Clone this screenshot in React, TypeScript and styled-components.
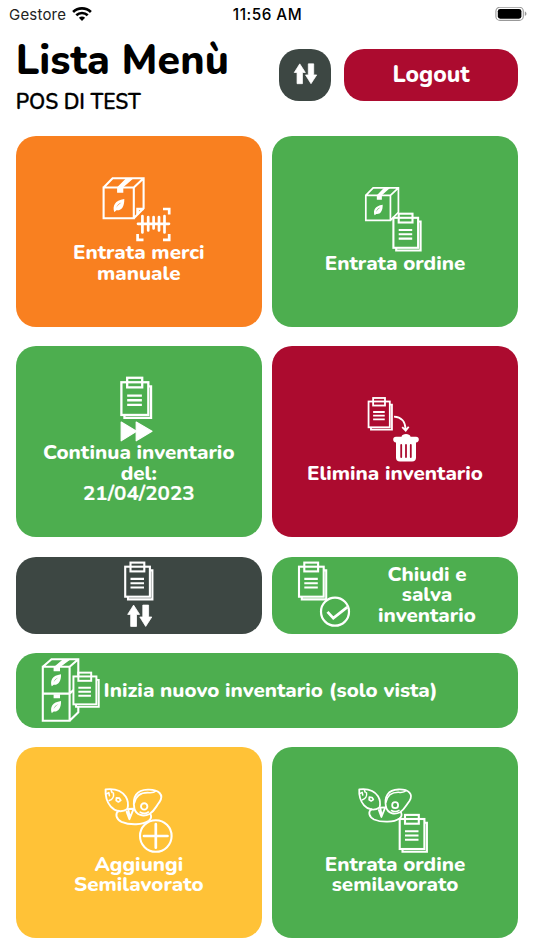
import React from "react";
import styled, { createGlobalStyle } from "styled-components";

const GlobalStyle = createGlobalStyle`
  * { box-sizing: border-box; }
  html, body { margin: 0; background: #fff; }
  body { font-family: "Nunito", "Lato", sans-serif; overflow: hidden; }
  button { font: inherit; border: 0; margin: 0; }
`;

const colors = {
  green: "#4dae4f",
  orange: "#f98020",
  red: "#ac0b2f",
  dark: "#3d4743",
  yellow: "#ffc237",
};

const Screen = styled.main`
  width: 534px;
  height: 950px;
  display: flex;
  flex-direction: column;
  background: #fff;
`;

const StatusBar = styled.div`
  height: 28px;
  flex: none;
  display: grid;
  grid-template-columns: 1fr auto 1fr;
  align-items: center;
  padding: 0 7px 0 9px;
  font-family: "Inter", sans-serif;
  font-size: 15px;
  color: #000;
`;

const Carrier = styled.div`
  display: flex;
  align-items: center;
  gap: 6px;
  letter-spacing: 0.2px;
  color: #222;
`;

const Clock = styled.div`
  font-size: 15.3px;
  font-weight: 500;
  letter-spacing: 0.5px;
  transform: translateX(-0.5px);
`;

const Battery = styled.svg`
  justify-self: end;
  display: block;
`;

const Header = styled.header`
  height: 108px;
  flex: none;
  display: flex;
  align-items: flex-start;
  padding: 21px 16px 0 15.7px;
`;

const Heading = styled.div`
  flex: 1;
  margin-top: -13px;
`;

const Title = styled.h1`
  margin: 0;
  font-size: 41px;
  line-height: 50px;
  font-weight: 800;
  letter-spacing: 0.1px;
  white-space: nowrap;
`;

const Subtitle = styled.div`
  margin-top: 4px;
  font-size: 20.9px;
  line-height: 24px;
  font-weight: 600;
  -webkit-text-stroke: 0.3px #000;
  white-space: nowrap;
`;

const HeaderButton = styled.button<{ $bg: string; $width: number }>`
  width: ${(p) => p.$width}px;
  height: 51.5px;
  margin-left: 13px;
  padding: 0 0 1.5px;
  display: flex;
  align-items: center;
  justify-content: center;
  border-radius: 20px;
  background: ${(p) => p.$bg};
  color: #fff;
  font-size: 23px;
  font-weight: 800;
`;

const Menu = styled.section`
  display: grid;
  grid-template-columns: 246px 246px;
  grid-template-rows: 190.6px 190.8px 77px 74.5px 190.8px;
  column-gap: 10.2px;
  row-gap: 19.6px;
  padding: 0 15.8px;
`;

const Tile = styled.button<{ $bg: string; $row?: boolean; $wide?: boolean }>`
  display: flex;
  flex-direction: ${(p) => (p.$row ? "row" : "column")};
  align-items: center;
  justify-content: ${(p) => (p.$row ? "flex-start" : "center")};
  grid-column: ${(p) => (p.$wide ? "span 2" : "auto")};
  padding: 0;
  min-width: 0;
  border-radius: 20px;
  background: ${(p) => p.$bg};
  color: #fff;
`;

const Label = styled.span`
  display: block;
  margin-top: -0.5px;
  padding-bottom: 2.2px;
  text-align: center;
  white-space: pre-line;
  font-size: 20.6px;
  line-height: 20.5px;
  font-weight: 800;
`;

const DateText = styled.span`
  display: block;
  font-weight: 700;
  -webkit-text-stroke: 0.2px #fff;
`;

const SideLabel = styled(Label)`
  flex: 1;
  margin-top: 0;
  padding: 0 16px 1.5px 0;
`;

const WideLabel = styled(Label)`
  margin-top: 0;
  padding: 0 0 0 0.8px;
`;

const Art = styled.svg`
  display: block;
  flex: none;
  fill: none;
  stroke: #fff;
  stroke-width: 2.1;
  overflow: visible;
`;

type Place = { x: number; y: number; s?: number };

const place = ({ x, y, s = 1 }: Place) => `translate(${x} ${y}) scale(${s})`;

const Leaf = (p: Place) => (
  <g transform={place(p)} stroke="none">
    <path
      fill="#fff"
      d="M1 12.5 C-.5 7 1.5 1.3 11.2 0 C11.4 7.8 8.2 12 3.3 11.3 L1.4 13 Z M3.2 9 C4.2 6.6 6 5 8.4 3.5 C5.8 4.2 3.8 6 3.2 9 Z"
      fillRule="evenodd"
    />
  </g>
);

const Carton = (p: Place) => (
  <g transform={place(p)}>
    <path d="M1 10.3 H31.2 V41 H1 Z L10 1 H41 V31 L31.2 41 M31.2 10.3 L41 1" />
    <path d="M23.5 1 H31 L20.7 10 V15.5 H14.5 V10 Z" fill="#fff" stroke="none" />
    <Leaf x={10.5} y={21.7} />
  </g>
);

const Clipboard = (p: Place) => (
  <g transform={place(p)}>
    <rect x="1" y="5" width="24.7" height="30" />
    <path d="M26 8.7 H28.2 V37.7 H3.8 V35" />
    <rect x="6.3" y=".9" width="13.8" height="8.8" />
    <path d="M6.3 17.2 H19.8 M6.3 21.5 H19.8 M6.3 25.8 H19.8" />
  </g>
);

const Arrows = (p: Place) => (
  <g transform={place(p)} fill="#fff" strokeWidth=".8" strokeLinejoin="round">
    <path d="M6.4 .5 L12.4 9.8 H9.3 V21.8 H3.5 V9.8 H.5 Z" />
    <path d="M18.5 21.8 L24.6 12.4 H21.4 V.5 H15.6 V12.4 H12.6 Z" />
  </g>
);

const Foods = (p: Place) => (
  <g transform={place(p)} strokeWidth="1.9" strokeLinejoin="round" strokeLinecap="round">
    <path d="M.8 1.2 C9 .2 17 2.4 21 8.6 C23.4 12.5 23.6 17 22.6 20.8 C17 24.6 10.5 23.4 6 18.4 C2.2 14 .4 7 .8 1.2 Z" />
    <path d="M1.4 5.8 L4 4.4 L4.6 7.4 M8.6 4.8 C9.4 8.6 7.4 11.6 4.4 12.4 M6.4 2.2 L7.2 4.2" strokeWidth="1.6" />
    <path d="M11.6 9.6 L14.6 10 L16 12.2 L13.6 13.8 L11.4 12.4 Z" strokeWidth="1.7" />
    <path d="M29.5 20 C27.5 9 31.5 1.6 43 1.4 C54 1 59.6 6.6 54.6 14 C50.8 18.8 49.8 22.8 44.7 25.8 C38.8 28.6 31.2 27.4 29.5 20 Z" />
    <path d="M29.6 15 C31.2 6.4 38 4.1 44.5 4.5 C48 4.7 50 3.8 51 2.8 M35.4 24 C38 25.4 41.6 25.2 43.6 23.8" strokeWidth="1.6" />
    <circle cx="39.4" cy="18.2" r="3.2" />
    <path d="M14 22.6 C10 25.4 11 30.6 16.7 33.6 C25.2 37.2 38.2 36.8 44 32.6 C46.5 30.7 47 28.8 45.7 26" />
    <path d="M22.6 20.8 L28.8 20.6 L24.6 31 L21.8 23.4 M23.4 21 L24.6 27" />
  </g>
);

const ScanArt = () => (
  <Art width="80" height="66" viewBox="0 0 80 66">
    <Carton x={3.6} y={0.2} />
    <g strokeWidth="2.7">
      <path d="M38.6 37.5 V32 H44.5 M64 32 H70.2 V37.5 M70.2 57 V62.8 H64 M44.5 62.8 H38.6 V57" />
      <path
        strokeLinecap="round"
        d="M39 46.8 H70 M43.4 39 V55.5 M49.2 40 V53.5 M54.6 40 V51.5 M60 40 V53.5 M65.5 39 V55.5"
      />
    </g>
  </Art>
);

const OrderArt = () => (
  <Art width="80" height="66" viewBox="0 0 80 66">
    <Carton x={10} y={0} s={0.815} />
    <Clipboard x={37.4} y={25.8} />
  </Art>
);

const ContinueArt = () => (
  <Art width="80" height="66" viewBox="0 0 80 66">
    <Clipboard x={21.3} y={-0.2} s={1.09} />
    <g fill="#fff" strokeWidth="1.2" strokeLinejoin="round">
      <path d="M22.2 45 L37.5 54.3 L22.2 63.8 Z" />
      <path d="M37.2 45 L53 54.3 L37.2 63.8 Z" />
    </g>
  </Art>
);

const DeleteArt = () => (
  <Art width="80" height="66" viewBox="0 0 80 66">
    <Clipboard x={12.7} y={0.2} s={0.86} />
    <path d="M39 19.6 C46 20 50.2 24.5 50.6 32 M47.2 30.2 L50.7 33.6 L53.7 29.7" strokeWidth="1.8" />
    <g fill="#fff" stroke="none">
      <path d="M41 39.8 H46.5 C47 36 55 36 55.6 39.8 H61 A2.8 2.8 0 0 1 61 45.4 H41 A2.8 2.8 0 0 1 41 39.8 Z" />
      <path d="M41 44.5 H61 V60.5 Q61 64.5 57 64.5 H45 Q41 64.5 41 60.5 Z" />
    </g>
    <path d="M46.2 48 V60 M51 48 V60 M55.8 48 V60" stroke={colors.red} strokeWidth="1.8" strokeLinecap="round" />
  </Art>
);

const SortArt = () => (
  <Art width="80" height="67" viewBox="0 0 80 67">
    <Clipboard x={25.2} y={-0.3} />
    <Arrows x={28.2} y={42.6} />
  </Art>
);

const SaveArt = () => (
  <Art width="80" height="67" viewBox="0 0 80 67">
    <Clipboard x={26} y={-0.3} />
    <circle cx="63" cy="49.7" r="14" fill={colors.green} strokeWidth="2.2" />
    <path d="M55.5 49.9 L61.3 56.1 L75.3 45.1" strokeWidth="2.7" />
  </Art>
);

const StockArt = () => (
  <Art width="87" height="67" viewBox="0 0 87 67">
    <path d="M26.8 9.7 H53.6 V63.7 H26.8 Z L35.5 2.2 H62.3 V55.2 L53.6 63.7 M53.6 9.7 L62.3 2.2 M26.8 36.6 H53.6 L62.3 28.7" />
    <path d="M47 2.2 H54.7 L44 10.2 V14.2 H37.6 V10.2 Z M37.6 37.2 H44 V41.2 H37.6 Z" fill="#fff" stroke="none" />
    <Leaf x={34.6} y={17.2} s={0.93} />
    <Leaf x={34.6} y={43.9} s={0.93} />
    <path d="M57.5 18.7 H82 V49.2 H57.5 Z" fill={colors.green} stroke="none" />
    <Clipboard x={56.5} y={14.8} s={0.93} />
  </Art>
);

const AddFoodArt = () => (
  <Art width="80" height="66" viewBox="0 0 80 66">
    <Foods x={5.8} y={0.2} />
    <circle cx="56.8" cy="48" r="15.8" fill={colors.yellow} strokeWidth="2.1" />
    <path d="M45 48 H68.5 M56.8 36.2 V59.7" strokeWidth="2.7" strokeLinecap="round" />
  </Art>
);

const FoodOrderArt = () => (
  <Art width="80" height="66" viewBox="0 0 80 66">
    <Foods x={3.5} y={0.2} s={0.93} />
    <rect x="45" y="30.7" width="25" height="30" fill={colors.green} stroke="none" />
    <Clipboard x={43.7} y={26} />
  </Art>
);

export default function App() {
  return (
    <Screen>
      <GlobalStyle />
      <StatusBar>
        <Carrier>
          Gestore
          <svg width="20" height="15" viewBox="0 0 20 15" fill="none" stroke="#000" strokeWidth="2.6">
            <path d="M1.1 5 C6 .1 14 .1 18.9 5 M4.3 8.3 C7.5 5.2 12.5 5.2 15.7 8.3" />
            <path d="M6.9 10.8 C8.7 9.2 11.3 9.2 13.1 10.8 L10 13.9 Z" fill="#000" stroke="none" />
          </svg>
        </Carrier>
        <Clock>11:56 AM</Clock>
        <Battery width="32" height="15" viewBox="0 0 32 15">
          <rect x=".9" y=".2" width="27.4" height="13.2" rx="4" fill="none" stroke="#999" strokeWidth="1.1" />
          <rect x="2.8" y="1.9" width="23.6" height="9.8" rx="2.4" fill="#000" />
          <path d="M29.8 4.6 C32 5.3 32 8.3 29.8 9 Z" fill="#999" />
        </Battery>
      </StatusBar>
      <Header>
        <Heading>
          <Title>Lista Menù</Title>
          <Subtitle>POS DI TEST</Subtitle>
        </Heading>
        <HeaderButton $bg={colors.dark} $width={51.6} aria-label="Ordina">
          <Art width="25" height="22" viewBox="0 0 25 22">
            <Arrows x={0.8} y={0.4} s={0.93} />
          </Art>
        </HeaderButton>
        <HeaderButton $bg={colors.red} $width={174}>Logout</HeaderButton>
      </Header>
      <Menu>
        <Tile $bg={colors.orange}>
          <ScanArt />
          <Label>{"Entrata merci\nmanuale"}</Label>
        </Tile>
        <Tile $bg={colors.green}>
          <OrderArt />
          <Label>Entrata ordine</Label>
        </Tile>
        <Tile $bg={colors.green}>
          <ContinueArt />
          <Label>
            {"Continua inventario\ndel:"}
            <DateText>21/04/2023</DateText>
          </Label>
        </Tile>
        <Tile $bg={colors.red}>
          <DeleteArt />
          <Label>Elimina inventario</Label>
        </Tile>
        <Tile $bg={colors.dark} aria-label="Ordina inventario">
          <SortArt />
        </Tile>
        <Tile $bg={colors.green} $row>
          <SaveArt />
          <SideLabel>{"Chiudi e\nsalva\ninventario"}</SideLabel>
        </Tile>
        <Tile $bg={colors.green} $row $wide>
          <StockArt />
          <WideLabel>Inizia nuovo inventario (solo vista)</WideLabel>
        </Tile>
        <Tile $bg={colors.yellow}>
          <AddFoodArt />
          <Label>{"Aggiungi\nSemilavorato"}</Label>
        </Tile>
        <Tile $bg={colors.green}>
          <FoodOrderArt />
          <Label>{"Entrata ordine\nsemilavorato"}</Label>
        </Tile>
      </Menu>
    </Screen>
  );
}
